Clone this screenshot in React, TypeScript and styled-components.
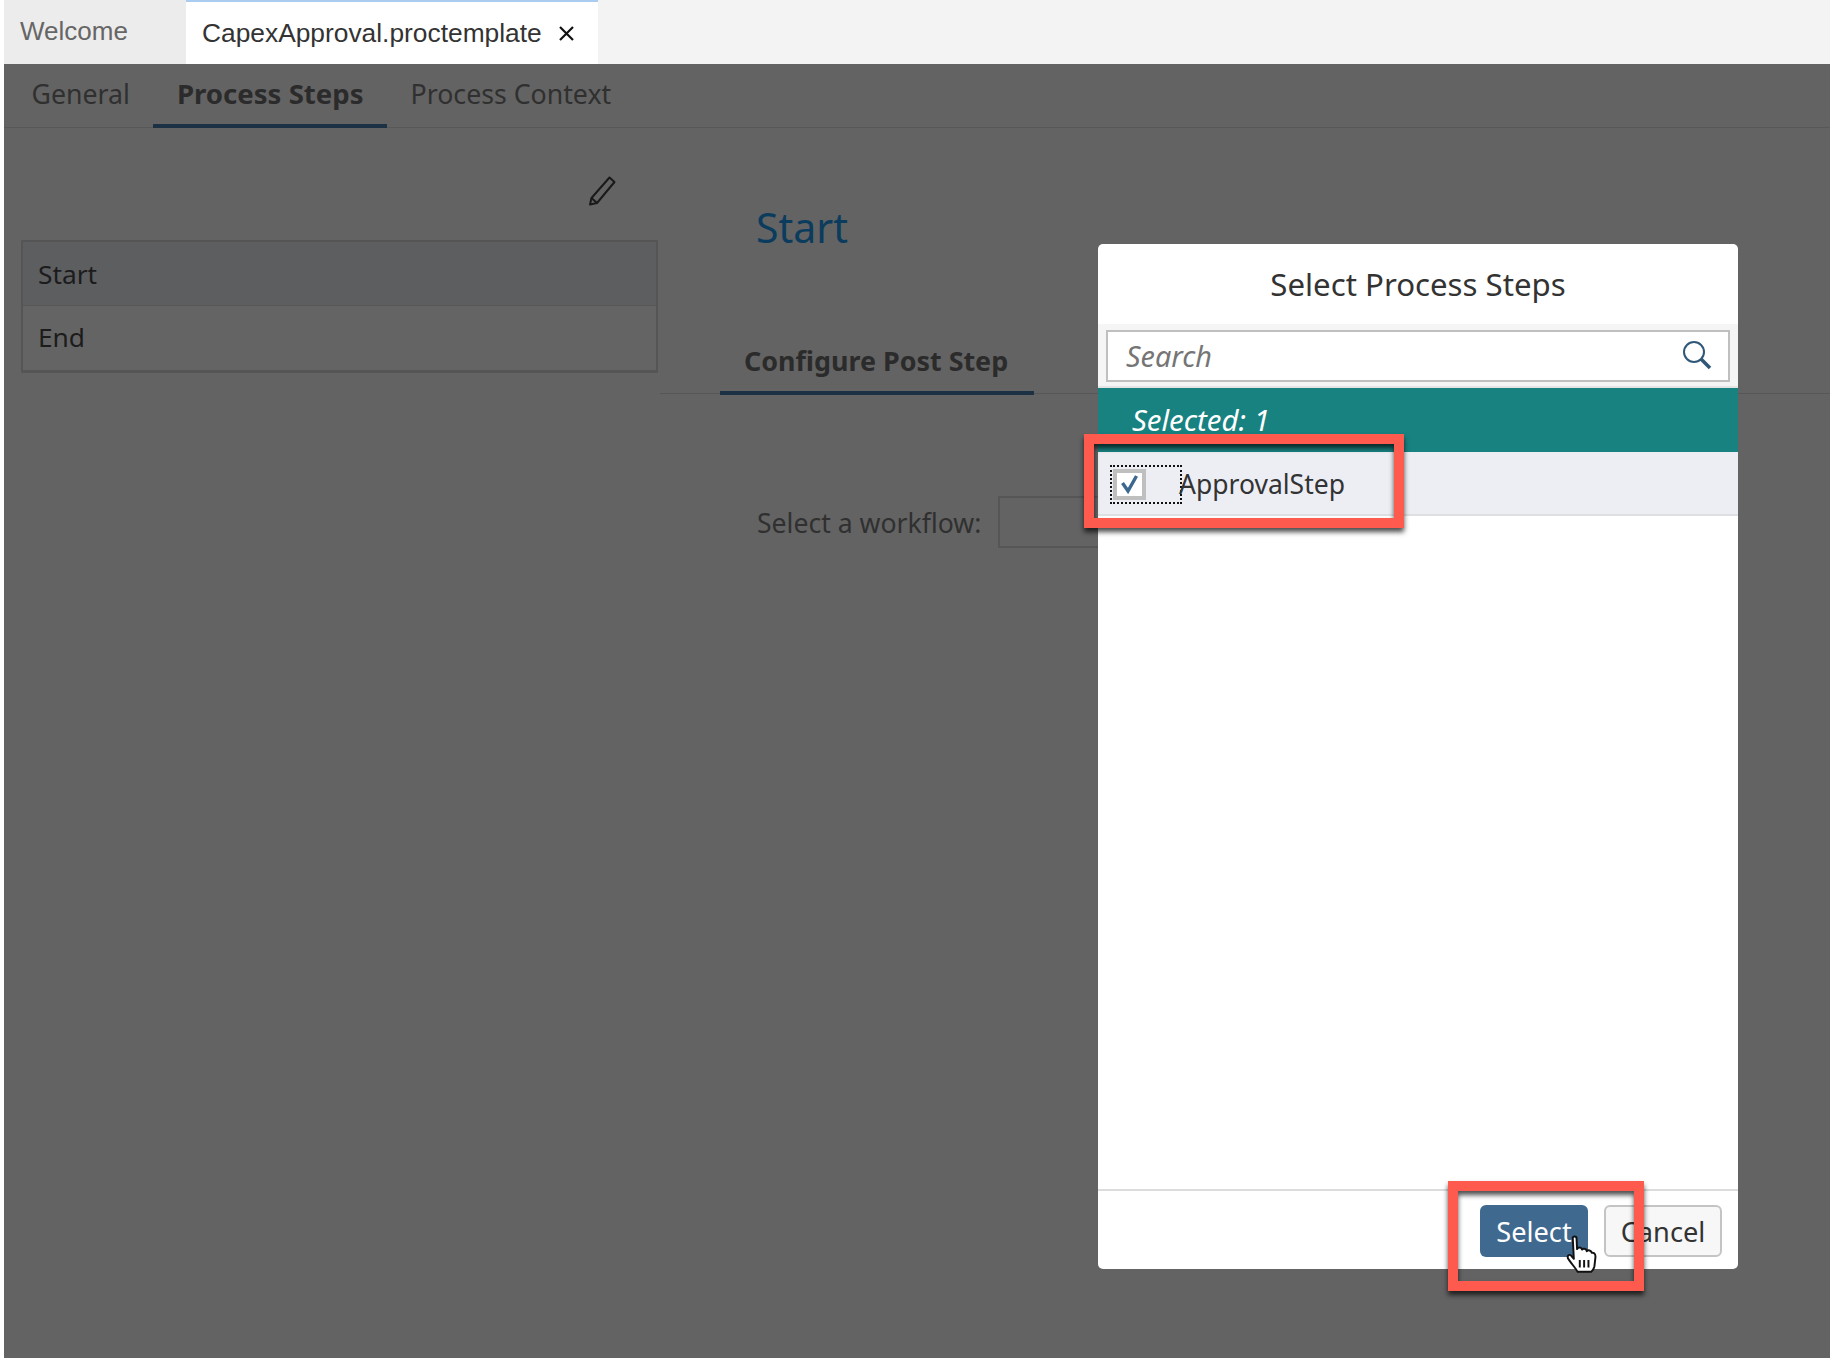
import React from "react";
import styled, { createGlobalStyle } from "styled-components";

const Global = createGlobalStyle`
  html, body { margin: 0; padding: 0; background: #fff; }
  #root { width: 1830px; height: 1358px; overflow: hidden; }
  * { box-sizing: border-box; }
`;

const SAP = `"Noto Sans", "Open Sans", sans-serif`;
const HELV = `"Liberation Sans", Arial, sans-serif`;

const Page = styled.div`
  position: relative;
  width: 1830px;
  height: 1358px;
  padding-left: 4px;
  display: flex;
  flex-direction: column;
  background: #fff;
  font-family: ${SAP};
`;

const FileTabs = styled.div`
  height: 64px;
  flex: none;
  display: flex;
  background: #f3f3f3;
`;
const WelcomeTab = styled.div`
  width: 182px;
  display: flex;
  align-items: center;
  padding: 0 0 2px 16px;
  background: #ececec;
  color: #666;
  font: 26px ${HELV};
`;
const ActiveTab = styled.div`
  width: 412px;
  display: flex;
  align-items: center;
  gap: 16px;
  padding: 0 0 0 16px;
  background: #fff;
  border-top: 2px solid #a9ccf0;
  color: #333;
  font: 26.35px ${HELV};
  svg { flex: none; }
`;

const Workspace = styled.div`
  flex: 1;
  display: flex;
  flex-direction: column;
  background: #636363;
`;
const SubTabs = styled.div`
  height: 64px;
  flex: none;
  display: flex;
  padding-left: 4px;
  border-bottom: 1px solid #585858;
`;
const SubTab = styled.div<{ $active?: boolean }>`
  height: 64px;
  padding: 0 23.5px 2px;
  display: flex;
  align-items: center;
  font-size: ${(p) => (p.$active ? "27.6px" : "26.7px")};
  font-weight: ${(p) => (p.$active ? 700 : 400)};
  color: ${(p) => (p.$active ? "#2b2b2b" : "#303030")};
  border-bottom: 4px solid ${(p) => (p.$active ? "#1d3144" : "transparent")};
`;

const Content = styled.div`
  flex: 1;
  display: grid;
  grid-template-columns: 656px 1fr;
`;
const LeftPane = styled.div`
  padding: 48px 0 0 17px;
  display: flex;
  flex-direction: column;
`;
const PencilRow = styled.div`
  height: 64px;
  display: flex;
  justify-content: flex-end;
  padding-right: 44px;
  align-items: flex-start;
`;
const StepList = styled.div`
  width: 637px;
  border: 2px solid #555;
  border-bottom-width: 3px;
`;
const StepRow = styled.div<{ $selected?: boolean }>`
  height: ${(p) => (p.$selected ? "63px" : "65px")};
  display: flex;
  align-items: center;
  padding: 0 0 ${(p) => (p.$selected ? "0" : "2px")} 15px;
  font-size: 26.3px;
  color: #1c1c1c;
  background: ${(p) => (p.$selected ? "#5d5e60" : "#646464")};
  & + & { border-top: 1px solid #575757; }
`;

const RightPane = styled.div`
  display: flex;
  flex-direction: column;
  padding-top: 69px;
`;
const Heading = styled.h1`
  margin: 0 0 0 96px;
  font-size: 41px;
  line-height: 60px;
  font-weight: 400;
  color: #0b3c5d;
`;
const SectionTabs = styled.div`
  margin-top: 74px;
  height: 63px;
  display: flex;
  padding-left: 60px;
  border-bottom: 1px solid #575757;
`;
const SectionTab = styled.div`
  width: 314px;
  height: 64px;
  display: flex;
  align-items: center;
  padding: 0 0 2px 24px;
  font-size: 26.9px;
  font-weight: 700;
  color: #2b2b2b;
  border-bottom: 4px solid #1d3144;
`;
const WorkflowRow = styled.div`
  margin-top: 102px;
  padding-left: 97px;
  display: flex;
  align-items: center;
  gap: 17px;
  font-size: 26.6px;
  color: #303030;
`;
const WorkflowLabel = styled.span`
  position: relative;
  top: 1px;
`;
const WorkflowBox = styled.div`
  width: 300px;
  height: 52px;
  border: 2px solid #565656;
`;

const Dialog = styled.div`
  position: absolute;
  left: 1098px;
  top: 244px;
  width: 640px;
  height: 1025px;
  display: flex;
  flex-direction: column;
  background: #fff;
  border-radius: 5px;
  overflow: hidden;
`;
const DialogTitle = styled.div`
  height: 80px;
  flex: none;
  display: flex;
  align-items: center;
  justify-content: center;
  font-size: 31.2px;
  color: #333;
`;
const SearchBar = styled.div`
  height: 64px;
  flex: none;
  padding: 6px 8px 6px;
  background: #f5f5f5;
  border-bottom: 2px solid #e4e4e4;
`;
const SearchInput = styled.div`
  height: 52px;
  display: flex;
  align-items: center;
  justify-content: space-between;
  padding: 0 16px 2px 18px;
  background: #fff;
  border: 2px solid #bfbfbf;
  font-size: 28.8px;
  font-style: italic;
  color: #757575;
`;
const InfoBar = styled.div`
  height: 64px;
  flex: none;
  display: flex;
  align-items: center;
  padding-left: 34px;
  background: #188281;
  color: #fff;
  font-size: 29.4px;
  font-style: italic;
`;
const ResultRow = styled.div`
  height: 64px;
  flex: none;
  display: flex;
  align-items: center;
  padding: 2px 0 0 12px;
  background: #eceef3;
  border-bottom: 2px solid #dedfe2;
  color: #333;
  font-size: 26.5px;
`;
const CheckFocus = styled.div`
  width: 72px;
  height: 39px;
  flex: none;
  margin-right: -3px;
  padding: 2px 1px;
  border: 2px dotted #111;
`;
const CheckBox = styled.div`
  width: 33px;
  height: 31px;
  display: flex;
  align-items: center;
  justify-content: center;
  background: #fff;
  border: 4px solid #bfbfbf;
`;
const ResultSpacer = styled.div`
  flex: 1;
`;
const DialogFooter = styled.div`
  height: 80px;
  flex: none;
  display: flex;
  justify-content: flex-end;
  align-items: flex-start;
  gap: 16px;
  padding: 14px 16px 0 0;
  border-top: 2px solid #dcdcdc;
`;
const FooterButton = styled.div<{ $primary?: boolean }>`
  height: 52px;
  display: flex;
  align-items: center;
  justify-content: center;
  width: ${(p) => (p.$primary ? "108px" : "118px")};
  border-radius: 6px;
  font-size: 27.2px;
  color: ${(p) => (p.$primary ? "#fff" : "#333")};
  background: ${(p) => (p.$primary ? "#3f698f" : "#f7f7f7")};
  border: ${(p) => (p.$primary ? "none" : "2px solid #c4c4c4")};
`;

const Callout = styled.div<{ $x: number; $y: number; $w: number; $h: number }>`
  position: absolute;
  left: ${(p) => p.$x}px;
  top: ${(p) => p.$y}px;
  width: ${(p) => p.$w}px;
  height: ${(p) => p.$h}px;
  border: 10px solid #fe5a4d;
  box-shadow: 0 4px 5px rgba(0, 0, 0, 0.7), inset 0 4px 5px rgba(0, 0, 0, 0.7);
  pointer-events: none;
`;
const HandCursor = styled.svg`
  position: absolute;
  left: 1565px;
  top: 1235px;
`;

const Pencil = () => (
  <svg width="28" height="30" viewBox="0 0 28 30" fill="none" stroke="#1a1a1a" strokeWidth="2" strokeLinejoin="round">
    <path d="M21.5 1.5 L26.5 6 L9 27 L2 28.5 L3.5 22 Z" />
    <path d="M3.5 22 L9 27" />
  </svg>
);
const CloseX = () => (
  <svg width="17" height="17" viewBox="0 0 17 17" stroke="#111" strokeWidth="2.2">
    <path d="M2 2 L15 15 M15 2 L2 15" />
  </svg>
);
const SearchIcon = () => (
  <svg width="30" height="30" viewBox="0 0 30 30" fill="none" stroke="#2f5878" strokeWidth="2">
    <circle cx="12" cy="12" r="10" />
    <path d="M19 19 L28 28" strokeWidth="3.5" />
  </svg>
);
const Check = () => (
  <svg width="18" height="20" viewBox="0 0 18 20" fill="none" stroke="#3c6890" strokeWidth="3.4">
    <path d="M1.5 9 L7 17 L15.5 2" />
  </svg>
);

export default function App() {
  return (
    <Page>
      <Global />
      <FileTabs>
        <WelcomeTab>Welcome</WelcomeTab>
        <ActiveTab>
          CapexApproval.proctemplate
          <CloseX />
        </ActiveTab>
      </FileTabs>
      <Workspace>
        <SubTabs>
          <SubTab>General</SubTab>
          <SubTab $active>Process Steps</SubTab>
          <SubTab>Process Context</SubTab>
        </SubTabs>
        <Content>
          <LeftPane>
            <PencilRow>
              <Pencil />
            </PencilRow>
            <StepList>
              <StepRow $selected>Start</StepRow>
              <StepRow>End</StepRow>
            </StepList>
          </LeftPane>
          <RightPane>
            <Heading>Start</Heading>
            <SectionTabs>
              <SectionTab>Configure Post Step</SectionTab>
            </SectionTabs>
            <WorkflowRow>
              <WorkflowLabel>Select a workflow:</WorkflowLabel>
              <WorkflowBox />
            </WorkflowRow>
          </RightPane>
        </Content>
      </Workspace>

      <Dialog>
        <DialogTitle>Select Process Steps</DialogTitle>
        <SearchBar>
          <SearchInput>
            Search
            <SearchIcon />
          </SearchInput>
        </SearchBar>
        <InfoBar>Selected: 1</InfoBar>
        <ResultRow>
          <CheckFocus>
            <CheckBox>
              <Check />
            </CheckBox>
          </CheckFocus>
          ApprovalStep
        </ResultRow>
        <ResultSpacer />
        <DialogFooter>
          <FooterButton $primary>Select</FooterButton>
          <FooterButton>Cancel</FooterButton>
        </DialogFooter>
      </Dialog>

      <Callout $x={1084} $y={434} $w={320} $h={94} />
      <Callout $x={1448} $y={1181} $w={196} $h={110} />
      <HandCursor width="35" height="39" viewBox="0 0 32 36">
        <path
          d="M7 2.5 C7 1 10.5 1 10.5 3 L11 13 C12 11 15 11 15.5 13.5 C16.5 12 19.5 12.5 20 15 C21 13.5 24 14 24.5 16.5 C26 16 28 17 28 20 L27 29 C26.5 31 25 33 24 34 L11.5 34 C10 31 7 28 3.5 23 C1 20 3 17 5.5 19 L8 22 Z"
          fill="#fff"
          stroke="#111"
          strokeWidth="1.8"
          strokeLinejoin="round"
        />
        <path d="M13.5 23 V30 M17.5 23 V30 M21.5 23 V30" stroke="#111" strokeWidth="1.8" />
      </HandCursor>
    </Page>
  );
}
